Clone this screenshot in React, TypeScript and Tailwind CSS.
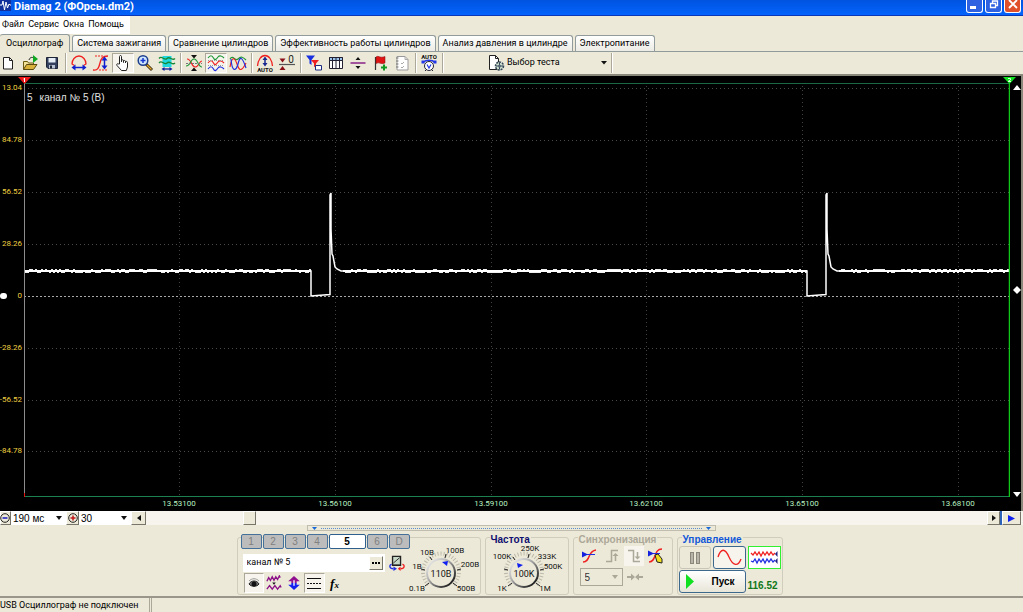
import React, { useState } from 'react';

const tabs = [
  'Осциллограф',
  'Система зажигания',
  'Сравнение цилиндров',
  'Эффективность работы цилиндров',
  'Анализ давления в цилиндре',
  'Электропитание',
];

// Plot area size in chart units
const PLOT_W = 986;
const PLOT_H = 414;

const yTicks = [
  { y: 5, label: '13.04' },
  { y: 57, label: '84.78' },
  { y: 109, label: '56.52' },
  { y: 161, label: '28.26' },
  { y: 213, label: '0' },
  { y: 265, label: '-28.26' },
  { y: 317, label: '-56.52' },
  { y: 368, label: '-84.78' },
];

const xTicks = [
  { x: 155, label: '13.53100' },
  { x: 311, label: '13.56100' },
  { x: 467, label: '13.59100' },
  { x: 622, label: '13.62100' },
  { x: 778, label: '13.65100' },
  { x: 934, label: '13.68100' },
];

// Injector pulse: drop to zero, spike, decay back to supply level
const pulse = (x: number) =>
  `L${x} 188 V213 L${x + 6} 212.5 L${x + 19} 211.5 V112 L${x + 20} 110 V146 L${x + 21} 171 L${x + 22} 173 L${x + 24} 184 L${x + 26} 186 L${x + 30} 188`;

const tracePath = `M0 188 ${pulse(287)} ${pulse(783)} L${PLOT_W} 188`;

// Noise on the supply level
const noisePath = (() => {
  let d = '';
  let seed = 17;
  for (let x = 1; x < PLOT_W - 2; x += 2) {
    seed = (seed * 1103515245 + 12345) % 2147483648;
    const inPulse = (x > 285 && x < 320) || (x > 781 && x < 816);
    if (inPulse) continue;
    const n = seed / 2147483648;
    if (n < 0.4) d += `M${x} 186.5h2`;
    else if (n < 0.8) d += `M${x} 189.5h2`;
  }
  return d;
})();

const Icon = ({ children, className = 'h-[18px] w-[18px]', box = '0 0 18 18' }: { children: React.ReactNode; className?: string; box?: string }) => (
  <svg className={`shrink-0 ${className}`} viewBox={box} fill="none" aria-hidden="true">
    {children}
  </svg>
);

const NewIcon = () => (
  <Icon>
    <path d="M4.500 3.500h6l3 3v8.500h-9z" fill="#fff" stroke="#222" />
    <path d="M10.500 3.500v3h3" stroke="#222" />
  </Icon>
);

const OpenIcon = () => (
  <Icon>
    <path d="M2.500 15.500v-8h4l1 1.500h5v2" fill="#f3e29a" stroke="#6b5a10" />
    <path d="M2.500 15.500l3-5h10.500l-3.500 5z" fill="#d9b23c" stroke="#5a4a10" />
    <path d="M8 6c1-3 3-3 5-2" stroke="#222" />
    <path d="M12 1l5 4-5 4z" fill="#10a820" />
  </Icon>
);

const SaveIcon = () => (
  <Icon>
    <path d="M3.500 3.500h11v11H5L3.500 13z" fill="#33415f" stroke="#1d2435" />
    <path d="M5.500 4h7v4.500h-7z" fill="#e6edf5" />
    <path d="M6 11h6v3.500H6z" fill="#b9c3d3" />
    <path d="M7 11.500h2v3H7z" fill="#1d2435" />
  </Icon>
);

const HorizIcon = () => (
  <Icon>
    <path d="M4.500 11.500L2 10c0-4 3-8 7-8s7 4 7 8l-2.500 1.500" stroke="#f02020" strokeWidth="1.300" />
    <path d="M3 13.500h12" stroke="#1020d0" strokeWidth="1.500" />
    <path d="M1.500 13.500l4-3v6zM16.500 13.500l-4-3v6z" fill="#1020d0" />
  </Icon>
);

const VertIcon = () => (
  <Icon>
    <path d="M1 16c5 1 6-3 7-7s2-7 8-7" stroke="#f02020" strokeWidth="1.300" />
    <path d="M7 16h9M3 2h8" stroke="#f02020" strokeDasharray="2 1" />
    <path d="M12.500 5v8" stroke="#1020d0" strokeWidth="1.500" />
    <path d="M12.500 2.500l3 4h-6zM12.500 15.500l3-4h-6z" fill="#1020d0" />
  </Icon>
);

const HandIcon = () => (
  <Icon>
    <path
      d="M5.500 10V2.500c0-1.300 2-1.300 2 0V8V6.500c0-1 2-1 2 .2V8.500V7.200c0-1 2-.9 2 .2V9V8c0-.9 2-.8 2 .4V13l-1.200 3.500H7.500L3 11.500c-1-1.500.8-2.200 1.500-1.500z"
      fill="#fff"
      stroke="#222"
    />
  </Icon>
);

const ZoomIcon = () => (
  <Icon>
    <path d="M10 10l6 6" stroke="#3b2a10" strokeWidth="3" />
    <path d="M11 11l4.500 4.500" stroke="#e0a92c" strokeWidth="1.300" />
    <circle cx="7" cy="6.500" r="4.800" fill="#cfe6ff" stroke="#1c3e8c" strokeWidth="1.500" />
    <path d="M4.500 6.500h5M7 4v5" stroke="#1436d0" strokeWidth="1.500" />
  </Icon>
);

const CyanIcon = () => (
  <Icon>
    <path d="M4.500 2h9v11h-9z" fill="#20d8e0" />
    <path d="M1 4.500c3-4 5 3 8 0s5 3 8 0" stroke="#188838" strokeWidth="1.300" />
    <path d="M1 9c3-4 5 3 8 0s5 3 8 0" stroke="#188838" strokeWidth="1.300" />
    <path d="M6 15h6" stroke="#1020a0" strokeWidth="1.300" />
    <path d="M3.500 15l3-2v4zM14.500 15l-3-2v4z" fill="#1020a0" />
  </Icon>
);

const CrossWavesIcon = () => (
  <Icon>
    <path d="M2 5c5 0 4 8 8 8s4-6 7-6" stroke="#f02020" strokeWidth="1.200" />
    <path d="M1 12c5 0 4-7 8-7s4 8 8 8" stroke="#209838" strokeWidth="1.200" />
    <path d="M1 9.500h16" stroke="#777" strokeDasharray="2 1" />
    <path d="M6 1h6L9 4.500zM6 17h6l-3-3.500z" fill="#111" />
  </Icon>
);

const ThreeWavesIcon = () => (
  <Icon>
    <path d="M1 4c2-3 4-3 5.500 0s3 1 4.500-1 4-1 6 1" stroke="#209838" strokeWidth="1.200" />
    <path d="M1 9c2-3 4-3 5.500 0s3 1 4.500-1 4-1 6 1" stroke="#f02020" strokeWidth="1.200" />
    <path d="M1 15c2-3 4-3 5.500 0s3 1 4.500-1 4-1 6 1" stroke="#2030e0" strokeWidth="1.200" />
    <path d="M1 6.500h16M1 11.500h16" stroke="#999" strokeDasharray="1 1" />
  </Icon>
);

const OverlayWavesIcon = () => (
  <Icon>
    <path d="M1 5c3-5 5 3 8 0s5-2 8 1" stroke="#209838" strokeWidth="1.200" />
    <path d="M1 13c2-12 5-9 7-3s4 9 9-1" stroke="#f02020" strokeWidth="1.200" />
    <path d="M2 5c1 13 5 13 7 5s4-8 8 4" stroke="#2030e0" strokeWidth="1.200" />
  </Icon>
);

const AutoLevelIcon = () => (
  <Icon>
    <path d="M1.500 12C2 6 5 1.500 9 1.500S16 6 16.500 12" stroke="#f02020" strokeWidth="1.300" />
    <path d="M9 4v7" stroke="#182890" strokeWidth="1.500" />
    <path d="M9 2.500l2.500 3.500h-5zM9 12.500l2.500-3.500h-5z" fill="#182890" />
    <text x="9" y="17.500" textAnchor="middle" fontSize="6" fontWeight="700" fill="#111">AUTO</text>
  </Icon>
);

const ZeroIcon = () => (
  <Icon>
    <path d="M1 10.500h16" stroke="#555" strokeWidth="1.200" />
    <path d="M1.500 4.500h6l-3 4zM1.500 16h6l-3-4z" fill="#8c1018" />
    <text x="13" y="8.500" textAnchor="middle" fontSize="10" fill="#222">0</text>
  </Icon>
);

const FiltersIcon = () => (
  <Icon>
    <path d="M1 1.500h9L6.500 6v5l-2-1.500V6z" fill="#1830e0" />
    <path d="M6 6h8l-3 3.500V14l-2-1.500v-3z" fill="#f02020" />
    <path d="M10.500 11.500h6v4.500h-6z" fill="#fff" stroke="#1c2c80" />
  </Icon>
);

const TableIcon = () => (
  <Icon>
    <path d="M2.500 3.500h13v11h-13z" fill="#fff" stroke="#223" />
    <path d="M2.500 3.500h13v3h-13z" fill="#9cc4ec" stroke="#223" />
    <path d="M5.500 4v11M9 4v11M12.500 4v11" stroke="#223" />
  </Icon>
);

const SplitIcon = () => (
  <Icon>
    <path d="M1.500 9h15" stroke="#882088" strokeWidth="1.500" />
    <path d="M9 3l2.500 3h-5zM9 15l2.500-3h-5z" fill="#111" />
  </Icon>
);

const FlagIcon = () => (
  <Icon>
    <path d="M4.500 3v13" stroke="#333" strokeWidth="1.200" />
    <path d="M5 3c2-2 4 1.500 9-.5V9c-4 2-6-1.500-9 .5z" fill="#e01414" stroke="#801010" strokeWidth=".5" />
    <path d="M13 10.500v6M10 13.500h6" stroke="#109820" strokeWidth="2" />
  </Icon>
);

const NotesIcon = () => (
  <Icon>
    <path d="M4 2.500h8l3 3v10.500H4z" fill="#fff" stroke="#999" />
    <path d="M3 4h2.500M3 7h2.500M3 10h2.500M3 13h2.500" stroke="#777" />
    <path d="M8 9l1 1 2-2M8 13l1 1 2-2M12 2.500v3h3" stroke="#aaa" />
  </Icon>
);

const AutoMeterIcon = () => (
  <Icon>
    <text x="9" y="4.500" textAnchor="middle" fontSize="6" fontWeight="700" fill="#111">AUTO</text>
    <path d="M3 8.500c3-3 9-3 12 0" stroke="#2438e8" strokeWidth="1.500" />
    <path d="M1.500 6.500h3v3h-3zM13.500 6.500h3v3h-3z" fill="#2438e8" />
    <circle cx="9" cy="12" r="4.500" fill="#fff" stroke="#223" />
    <path d="M7 10.500l2 3.500 2-3.500" stroke="#2438e8" strokeWidth="1.200" />
    <path d="M5 17l1.500-1.500M13 17l-1.500-1.500" stroke="#223" />
  </Icon>
);

const toolGroups = [
  [
    { name: 'Новый', icon: <NewIcon /> },
    { name: 'Открыть', icon: <OpenIcon /> },
    { name: 'Сохранить', icon: <SaveIcon /> },
  ],
  [
    { name: 'Измерение времени', icon: <HorizIcon /> },
    { name: 'Измерение уровня', icon: <VertIcon /> },
    { name: 'Рука', icon: <HandIcon />, pressed: true },
    { name: 'Масштаб', icon: <ZoomIcon /> },
    { name: 'Выделение', icon: <CyanIcon /> },
  ],
  [
    { name: 'Центрировать', icon: <CrossWavesIcon /> },
    { name: 'Раздельно', icon: <ThreeWavesIcon />, pressed: true },
    { name: 'Совместно', icon: <OverlayWavesIcon /> },
  ],
  [
    { name: 'Автоуровень', icon: <AutoLevelIcon /> },
    { name: 'Ноль', icon: <ZeroIcon /> },
  ],
  [
    { name: 'Фильтры', icon: <FiltersIcon /> },
    { name: 'Таблица', icon: <TableIcon /> },
    { name: 'Разделить', icon: <SplitIcon /> },
    { name: 'Метка', icon: <FlagIcon /> },
    { name: 'Заметки', icon: <NotesIcon /> },
  ],
  [{ name: 'Автоизмерение', icon: <AutoMeterIcon /> }],
];

const Separator = () => (
  <div className="flex h-5 w-[5px] shrink-0 justify-center">
    <div className="w-px bg-[#aca899]" />
    <div className="w-px bg-white" />
  </div>
);

const TitleBar = () => (
  <header className="flex h-4 shrink-0 justify-between border-b border-[#0a36b8] bg-gradient-to-b from-[#0054e0] to-[#0463fc]">
    <div className="flex items-start">
      <svg className="h-3 w-3" viewBox="0 0 12 12" fill="none" aria-hidden="true">
        <path d="M0 0h11v11H0z" fill="#12309c" />
        <path d="M0 5h2l1-4 1.500 9L6 2l1.500 6L9 4l1 1h1" stroke="#fff" />
      </svg>
      <h1 className="ml-0.5 text-[11px] leading-[13px] font-bold text-white">Diamag 2 (ФОрсы.dm2)</h1>
    </div>
    <div className="flex gap-0.5 pr-0.5">
      <button aria-label="Свернуть" className="flex h-[13px] w-[17px] items-end justify-start rounded-b-[3px] border border-t-0 border-white bg-[#2f62e0] pb-[3px] pl-[3px]">
        <span className="h-[3px] w-1.5 bg-white" />
      </button>
      <button aria-label="Восстановить" className="flex h-[13px] w-[17px] justify-center rounded-b-[3px] border border-t-0 border-white bg-[#2f62e0]">
        <svg className="h-2.5 w-2.5" viewBox="0 0 10 10" fill="none" stroke="#fff" aria-hidden="true">
          <path d="M3.500 3V1h5v4.500H7M1.500 3.500h5v4h-5z" strokeWidth="1.300" />
        </svg>
      </button>
      <button aria-label="Закрыть" className="flex h-[13px] w-[17px] justify-center rounded-b-[3px] border border-t-0 border-white bg-[#e0512b]">
        <svg className="h-2.5 w-2.5" viewBox="0 0 10 10" fill="none" stroke="#fff" aria-hidden="true">
          <path d="M1 0l8 8M9 0L1 8" strokeWidth="1.800" />
        </svg>
      </button>
    </div>
  </header>
);

const Toolbar = () => (
  <div className="flex h-6 shrink-0 items-center border-b-2 border-[#8a877b] pb-px">
    <div className="-ml-[3px] flex items-center">
      {toolGroups.map((group, i) => (
        <React.Fragment key={i}>
          {group.map((tool) => (
            <button
              key={tool.name}
              aria-label={tool.name}
              className={`flex h-5 w-[22px] items-center justify-center border ${tool.pressed ? 'border-t-[#aca899] border-r-white border-b-white border-l-[#aca899] bg-[#f6f4ec]' : 'border-transparent'}`}
            >
              {tool.icon}
            </button>
          ))}
          <Separator />
        </React.Fragment>
      ))}
    </div>
    <button className="ml-[42px] flex w-[122px] items-center gap-0.5">
      <Icon>
        <path d="M2.500 1.500h6l3 3v11h-9z" fill="#fff" stroke="#222" />
        <path d="M8.500 1.500v3h3" stroke="#222" />
        <circle cx="12.500" cy="12" r="4" fill="#cfe0cf" stroke="#345" strokeWidth="1.500" strokeDasharray="2 1" />
        <path d="M9 12h7M12.500 8.500v7" stroke="#345" />
        <circle cx="12.500" cy="12" r="1.500" fill="#567" />
      </Icon>
      <span>Выбор теста</span>
      <svg className="mr-0.5 ml-auto h-1 w-1.5" viewBox="0 0 6 4" aria-hidden="true"><path d="M0 0h6L3 3.500z" fill="#111" /></svg>
    </button>
    <Separator />
  </div>
);

const Scope = () => (
  <main className="grid min-h-[300px] flex-1 grid-cols-[24px_minmax(0,1fr)_11px] grid-rows-[7px_minmax(0,1fr)_14px] border-r-2 border-[#8a877b] bg-black">
    <div className="relative col-start-1 row-start-2">
      {yTicks.map((tick) => (
        <span
          key={tick.label}
          className="absolute right-0.5 -translate-y-1/2 text-[8px] leading-[8px] text-[#f0d040]"
          style={{ top: `${(tick.y / PLOT_H) * 100}%` }}
        >
          {tick.label}
        </span>
      ))}
      <span className="absolute left-0 h-1.5 w-[7px] -translate-y-1/2 rounded-full bg-white" style={{ top: `${(213 / PLOT_H) * 100}%` }} />
    </div>

    <div className="relative col-start-2 row-start-2">
      <svg className="absolute inset-0 h-full w-full" viewBox={`0 0 ${PLOT_W} ${PLOT_H}`} preserveAspectRatio="none" fill="none" aria-label="Осциллограмма">
        {yTicks.map((tick) => (
          <path
            key={tick.label}
            d={`M0 ${tick.y + 0.5}H${PLOT_W}`}
            stroke={tick.label === '0' ? '#a8a8a8' : '#484848'}
            strokeDasharray={tick.label === '0' ? '2 2' : '1 3'}
            vectorEffect="non-scaling-stroke"
          />
        ))}
        {xTicks.map((tick) => (
          <path key={tick.label} d={`M${tick.x + 0.5} 3V${PLOT_H}`} stroke="#404040" strokeDasharray="1 3" vectorEffect="non-scaling-stroke" />
        ))}
        <path d={tracePath} stroke="#fff" strokeWidth="1.500" vectorEffect="non-scaling-stroke" />
        <path d={`M0 188H287M319 188H783M815 188H${PLOT_W}`} stroke="#fff" strokeWidth="2" vectorEffect="non-scaling-stroke" />
        <path d={noisePath} stroke="#eee" vectorEffect="non-scaling-stroke" />
        <path d={`M0 .5H${PLOT_W}`} stroke="#1a6845" vectorEffect="non-scaling-stroke" />
        <path d={`M0 ${PLOT_H - 0.5}H${PLOT_W}`} stroke="#1c8050" vectorEffect="non-scaling-stroke" />
        <path d={`M.5 0V${PLOT_H}`} stroke="#8c8c8c" vectorEffect="non-scaling-stroke" />
        <path d={`M.5 ${PLOT_H - 4}V${PLOT_H}`} stroke="#e01010" vectorEffect="non-scaling-stroke" />
        <path d={`M${PLOT_W - 0.5} 0V${PLOT_H}`} stroke="#10c818" strokeWidth="1.500" vectorEffect="non-scaling-stroke" />
      </svg>
      <svg className="absolute -top-1.5 -left-1.5 h-[7px] w-[13px]" viewBox="0 0 13 7" aria-hidden="true">
        <path d="M0 0h13L6.500 7z" fill="#f01818" />
        <path d="M6.500 1v4M5.500 2h1" stroke="#fff" />
      </svg>
      <svg className="absolute -top-1.5 -right-1.5 h-[7px] w-[13px]" viewBox="0 0 13 7" aria-hidden="true">
        <path d="M0 0h13L6.500 7z" fill="#10e020" />
        <path d="M5 1.500h2.500v1.500L5 4.500h3" stroke="#d8ffd8" fill="none" />
      </svg>
      <div className="absolute top-2 left-[3px] flex gap-[7px] font-['Liberation_Sans',sans-serif] text-[10px] leading-[13px] text-[#e0e0e0]">
        <span>5</span>
        <span>канал № 5 (В)</span>
      </div>
    </div>

    <div className="relative col-start-3 row-start-2">
      <svg className="absolute top-0.5 right-0 h-[5px] w-2" viewBox="0 0 8 5" aria-hidden="true"><path d="M4 0l4 5H0z" fill="#fff" /></svg>
      <svg className="absolute top-1/2 right-0 h-2 w-2 -translate-y-1/2" viewBox="0 0 8 8" aria-hidden="true"><path d="M4 0l4 4-4 4-4-4z" fill="#fff" /></svg>
      <svg className="absolute right-0 bottom-0 h-[5px] w-2" viewBox="0 0 8 5" aria-hidden="true"><path d="M0 0h8L4 5z" fill="#fff" /></svg>
    </div>

    <div className="relative col-start-2 row-start-3">
      {xTicks.map((tick) => (
        <span
          key={tick.label}
          className="absolute top-[3px] -translate-x-1/2 text-[8px] leading-[8px] text-[#b8f0c0]"
          style={{ left: `${(tick.x / PLOT_W) * 100}%` }}
        >
          {tick.label}
        </span>
      ))}
    </div>
  </main>
);

const DropArrow = ({ color = '#111' }: { color?: string }) => (
  <svg className="pointer-events-none absolute top-1/2 right-1 h-1 w-1.5 -translate-y-1/2" viewBox="0 0 6 4" aria-hidden="true">
    <path d="M0 0h6L3 4z" fill={color} />
  </svg>
);

const raised = 'border border-t-white border-r-[#77746a] border-b-[#77746a] border-l-white bg-[#ece9d8]';

const ScrollRow = () => (
  <div className="flex h-[14px] shrink-0 items-stretch bg-[#f6f4ec]">
    <button aria-label="Уменьшить" className={`flex w-[11px] items-center justify-end ${raised}`}>
      <svg className="h-2.5 w-2.5 shrink-0" viewBox="0 0 10 10" fill="none" aria-hidden="true">
        <circle cx="5" cy="5" r="4.300" stroke="#222" />
        <path d="M2.500 5h5" stroke="#1818c0" strokeWidth="1.500" />
      </svg>
    </button>
    <label className="relative w-[55px] bg-white">
      <select aria-label="Развёртка" className="h-full w-full appearance-none pl-0.5 font-['Liberation_Sans',sans-serif] text-[10px] leading-[13px]">
        <option>190 мс</option>
      </select>
      <DropArrow />
    </label>
    <button aria-label="Увеличить" className={`flex w-[13px] items-center justify-center ${raised}`}>
      <svg className="h-2.5 w-2.5 shrink-0" viewBox="0 0 10 10" fill="none" aria-hidden="true">
        <circle cx="5" cy="5" r="4.300" stroke="#222" />
        <path d="M2.500 5h5M5 2.500v5" stroke="#c01818" strokeWidth="1.500" />
      </svg>
    </button>
    <label className="relative w-[52px] bg-white">
      <select aria-label="Усиление" className="h-full w-full appearance-none pl-0.5 font-['Liberation_Sans',sans-serif] text-[10px] leading-[13px]">
        <option>30</option>
      </select>
      <DropArrow />
    </label>
    <button aria-label="Влево" className={`flex w-[15px] items-center justify-center ${raised}`}>
      <svg className="h-1.5 w-1" viewBox="0 0 4 6" aria-hidden="true"><path d="M4 0v6L0 3z" fill="#111" /></svg>
    </button>
    <div className="flex flex-1">
      <div className="w-[11%]" />
      <div className={`ml-1 w-[13px] ${raised}`} />
    </div>
    <button aria-label="Вправо" className={`flex w-[13px] items-center justify-center ${raised}`}>
      <svg className="h-1.5 w-1" viewBox="0 0 4 6" aria-hidden="true"><path d="M0 0v6l4-3z" fill="#111" /></svg>
    </button>
    <div className="w-0.5 bg-[#2c62b8]" />
    <button aria-label="В конец" className={`mr-0.5 flex w-[19px] items-center justify-center ${raised}`}>
      <svg className="h-[7px] w-[7px]" viewBox="0 0 7 7" aria-hidden="true"><path d="M0 0v7l7-3.500z" fill="#1020f0" /></svg>
    </button>
  </div>
);

type KnobLabel = { x: number; y: number; text: string };

const Knob = ({ value, labels, pointer }: { value: string; labels: KnobLabel[]; pointer: string }) => (
  <svg className="h-14 w-[82px] shrink-0" viewBox="0 0 82 56" aria-label={value}>
    <defs>
      <linearGradient id="rim" x1="0" y1="0" x2="1" y2="1">
        <stop offset="0" stopColor="#fff" />
        <stop offset=".4" stopColor="#b0b0b0" />
        <stop offset=".9" stopColor="#101010" />
      </linearGradient>
    </defs>
    <path d="M28.500 46.500a18 18 0 1 1 25 0" fill="none" stroke="#bcb9aa" strokeWidth="4" strokeDasharray="1 2" />
    <path d="M25 48l4-3M57 48l-4-3M21 31l4 1M61 31l-4 1M30 19l2 3M46 16l-1 4" stroke="#222" />
    <circle cx="41" cy="35" r="15" fill="url(#rim)" />
    <circle cx="41" cy="35" r="13" fill="#ece9d8" />
    <path d={pointer} fill="#1020f0" />
    <text x="41" y="39" textAnchor="middle" fontSize="9" fill="#111">{value}</text>
    {labels.map((label) => (
      <text key={label.text} x={label.x} y={label.y} textAnchor="middle" fontSize="8" fill="#111">{label.text}</text>
    ))}
  </svg>
);

const voltLabels = [
  { x: 27, y: 17, text: '10В' },
  { x: 55, y: 15, text: '100В' },
  { x: 70, y: 29, text: '200В' },
  { x: 66, y: 53, text: '500В' },
  { x: 17, y: 53, text: '0.1В' },
  { x: 17, y: 31, text: '1В' },
];

const freqLabels = [
  { x: 47, y: 13, text: '250K' },
  { x: 19, y: 21, text: '100K' },
  { x: 64, y: 21, text: '333K' },
  { x: 70, y: 31, text: '500K' },
  { x: 62, y: 53, text: '1M' },
  { x: 19, y: 53, text: '1K' },
];

const channels = ['1', '2', '3', '4', '5', '6', 'D'];

const ChannelGroup = () => {
  const [channel, setChannel] = useState('5');

  return (
    <section className="flex w-[244px] rounded-[3px] border border-[#d0cdbd]">
      <div className="-mt-1 w-[168px] shrink-0 pl-[3px]">
        <div className="flex w-[170px]">
          {channels.map((c) => (
            <button
              key={c}
              onClick={() => setChannel(c)}
              className={`mr-px h-[15px] rounded-[2px] border font-['Liberation_Sans',sans-serif] text-[10px] leading-[12px] ${c === channel ? 'w-[37px] border-[#2f5f8c] bg-white font-bold text-black' : 'w-[21px] border-[#44709a] bg-[#bcbcbc] text-[#808080]'}`}
            >
              {c}
            </button>
          ))}
        </div>
        <div className="mt-[5px] flex items-center gap-1">
          <div className="ml-0.5 flex h-[18px] w-[142px] items-center bg-white pr-0.5">
            <input aria-label="Название канала" defaultValue="канал № 5" className="w-0 flex-1 pl-1 text-[9px] outline-none" />
            <button aria-label="Выбрать" className={`flex h-[14px] w-[14px] items-center justify-center gap-px ${raised}`}>
              <span className="h-0.5 w-0.5 bg-black" />
              <span className="h-0.5 w-0.5 bg-black" />
              <span className="h-0.5 w-0.5 bg-black" />
            </button>
          </div>
          <Icon className="h-4 w-4">
            <path d="M4 1.500h9v10H4z" fill="#c8d8c8" stroke="#222" strokeWidth="1.500" />
            <path d="M5 9l7-6M4 11.500h9" stroke="#222" />
            <path d="M5 15.500c-5 0-5-5-2-5" stroke="#2030e0" strokeWidth="1.500" />
            <path d="M13 15.500c5 0 5-5 2-5" stroke="#f02020" strokeWidth="1.500" />
            <path d="M5 13l4 2.500L5 18z" fill="#2030e0" />
            <path d="M13 13l-3 2.500 3 2.500z" fill="#f02020" />
          </Icon>
        </div>
        <div className="mt-px ml-[3px] flex items-center">
          <button aria-label="Показать" className="flex h-5 w-5 items-center justify-center border border-t-[#aca899] border-r-white border-b-white border-l-[#aca899] bg-[#f6f4ec]">
            <Icon className="h-3 w-3" box="0 0 12 12">
              <path d="M1 7c2-4 8-4 10 0-2 3-8 3-10 0z" fill="#777" stroke="#222" />
              <circle cx="6" cy="7" r="2.500" fill="#111" />
              <path d="M1 4c3-3 7-3 10 0" stroke="#999" />
            </Icon>
          </button>
          <button aria-label="Инвертировать" className="flex h-5 w-5 items-center justify-center">
            <Icon className="h-4 w-4">
              <path d="M1 7l2-4 2 3 2-4 2 4 2-4 2 3 2-4 1 2M1 16l3-4 3 4 3-4 3 4 3-4 1 2" stroke="#8c1088" strokeWidth="1.500" />
              <path d="M7 8.500h4L9 11z" fill="#111" />
            </Icon>
          </button>
          <button aria-label="Масштаб по вертикали" className="flex h-5 w-5 items-center justify-center">
            <Icon className="h-4 w-4">
              <path d="M9 1L2.500 7H6v2h6V7h3.500z" fill="#901090" />
              <path d="M9 17l-6.500-6H6V9h6v2h3.500z" fill="#1420f0" />
              <path d="M9 6v6" stroke="#fff" strokeWidth="1.500" />
            </Icon>
          </button>
          <button aria-label="Линии" className="flex h-5 w-[21px] items-center justify-center border border-t-[#aca899] border-r-white border-b-white border-l-[#aca899] bg-[#f6f4ec]">
            <Icon className="h-4 w-4" box="0 0 16 16">
              <path d="M1 3.500h14M1 13.500h14" stroke="#111" />
              <path d="M1 8.500h14" stroke="#111" strokeDasharray="2 1" />
            </Icon>
          </button>
          <button aria-label="Функция" className="w-5 font-['Liberation_Serif',serif] text-[13px] leading-none font-bold italic">
            f<span className="text-[9px]">x</span>
          </button>
        </div>
      </div>
      <div className="-ml-[6px]">
        <Knob value="110В" labels={voltLabels} pointer="M42 24l6-1-1 5z" />
      </div>
    </section>
  );
};

const Group = ({ title, titleClass, className, children }: { title: string; titleClass: string; className: string; children: React.ReactNode }) => (
  <fieldset className={`relative rounded-[3px] border border-[#d0cdbd] ${className}`}>
    <legend className={`absolute -top-1 left-1 bg-[#ece9d8] px-px font-['Liberation_Sans',sans-serif] text-[10px] leading-[11px] font-bold ${titleClass}`}>{title}</legend>
    {children}
  </fieldset>
);

const SyncGroup = () => (
  <Group title="Синхронизация" titleClass="text-[#aca899]" className="w-[100px]">
    <div className="mt-2 ml-1 flex">
      <button aria-label="Уровень" className="flex h-5 w-[23px] items-center justify-center">
        <Icon className="h-4 w-4" box="0 0 16 16">
          <path d="M2 14c8 0 4-11 13-12" stroke="#f02020" strokeWidth="1.500" />
          <path d="M1 6.500h13" stroke="#2030e0" />
          <path d="M1 3.500l6 3-6 3z" fill="#1420e0" />
        </Icon>
      </button>
      <button aria-label="По фронту" disabled className="flex h-5 w-[23px] items-center justify-center">
        <Icon className="h-4 w-4" box="0 0 16 16">
          <path d="M2 13.500h5.500v-11H14M11.500 13V7" stroke="#aca899" strokeWidth="1.500" />
          <path d="M11.500 5l3 3h-6z" fill="#aca899" />
        </Icon>
      </button>
      <button aria-label="По спаду" disabled className="flex h-5 w-5 items-center justify-center bg-[#f6f4ec]">
        <Icon className="h-4 w-4" box="0 0 16 16">
          <path d="M2 2.500h5.500v11H14M11.500 4v5" stroke="#aca899" strokeWidth="1.500" />
          <path d="M11.500 11.500l3-3h-6z" fill="#aca899" />
        </Icon>
      </button>
      <button aria-label="Захват" className="flex h-5 w-[23px] items-center justify-center">
        <Icon className="h-4 w-4" box="0 0 16 16">
          <path d="M2 14C10 14 6 1 15 1" stroke="#f02020" strokeWidth="1.500" />
          <path d="M1 5.500h12" stroke="#2030e0" />
          <path d="M1 2.500l6 3-6 3z" fill="#1420e0" />
          <path d="M8 7l3-1 4 5v4l-5-1z" fill="#f0e020" stroke="#222" />
        </Icon>
      </button>
    </div>
    <div className="mt-0.5 ml-1.5 flex items-center gap-1">
      <label className="relative h-[18px] w-[43px] border border-[#aca899]">
        <select aria-label="Канал синхронизации" disabled className="h-full w-full appearance-none pl-1 font-['Liberation_Sans',sans-serif] text-[10px] text-[#333] opacity-100">
          <option>5</option>
        </select>
        <DropArrow color="#aca899" />
      </label>
      <Icon className="h-4 w-4" box="0 0 16 16">
        <path d="M0 8h5M11 8h5" stroke="#aca899" strokeWidth="2" />
        <path d="M4 4.500L8 8l-4 3.500zM12 4.500L8 8l4 3.500z" fill="#aca899" />
      </Icon>
    </div>
  </Group>
);

const ControlGroup = () => (
  <Group title="Управление" titleClass="text-[#1258d8]" className="w-[106px]">
    <div className="mt-2 ml-px flex gap-0.5">
      <button aria-label="Пауза" disabled className="flex h-[23px] w-[32px] items-center justify-center gap-0.5 rounded-[3px] border border-[#c8c5b6]">
        <span className="h-3 w-1 border border-[#8a877b] bg-[#b8b5a8]" />
        <span className="h-3 w-1 border border-[#8a877b] bg-[#b8b5a8]" />
      </button>
      <button aria-label="Одиночный" className="flex h-[23px] w-[33px] items-center justify-center rounded-[3px] border border-[#3d688e] bg-[#f6f4ec]">
        <svg className="h-[17px] w-[25px]" viewBox="0 0 25 17" fill="none" aria-hidden="true">
          <path d="M1 8C4-1 8-1 12 8s9 10 12 2" stroke="#f02020" strokeWidth="1.300" />
        </svg>
      </button>
      <button aria-label="Непрерывный" className="flex h-[23px] w-[33px] items-center justify-center border border-[#30f030] bg-white">
        <svg className="h-[17px] w-[28px]" viewBox="0 0 28 17" fill="none" aria-hidden="true">
          <path d="M1 4l2 2 2-3 2 3 2-3 2 4 2-4 2 3 2-3 2 3 2-3 2 3 2-2" stroke="#f02020" strokeWidth="1.300" />
          <path d="M1 12l2 1 2-3 2 4 2-4 2 3 2-3 2 4 2-4 2 3 2-3 2 3 2-2" stroke="#2030e0" strokeWidth="1.300" />
          <path d="M27.500 2v6L25 5zM27.500 9v6L25 12z" fill="#202080" />
        </svg>
      </button>
    </div>
    <div className="mt-px ml-px flex items-center gap-0.5">
      <button className="flex h-[23px] w-[67px] items-center rounded-[3px] border border-[#3d688e] bg-gradient-to-b from-white to-[#e8e5d8] pl-1.5 font-['Liberation_Sans',sans-serif] text-[10px] font-bold">
        <svg className="h-[15px] w-2" viewBox="0 0 8 15" aria-hidden="true"><path d="M0 0v15l8-7.500z" fill="#10e020" /></svg>
        <span className="flex-1 pl-2">Пуск</span>
      </button>
      <output className="pt-2 font-['Liberation_Sans',sans-serif] text-[10px] font-bold text-[#107818]">116.52</output>
    </div>
  </Group>
);

const ControlPanel = () => (
  <div className="shrink-0 pb-px">
    <div className="mx-auto flex h-[6px] w-[409px] items-center justify-between border border-[#c0bdae] px-1">
      <svg className="h-[3px] w-[5px]" viewBox="0 0 5 3" aria-hidden="true"><path d="M0 0h5L2.500 3z" fill="#1868d8" /></svg>
      <div className="mx-1 flex-1 border-t border-dotted border-[#5c8cd0]" />
      <svg className="h-[3px] w-[5px]" viewBox="0 0 5 3" aria-hidden="true"><path d="M0 0h5L2.500 3z" fill="#1868d8" /></svg>
    </div>
    <div className="mt-1.5 flex h-[58px] justify-center gap-1 pr-1">
      <ChannelGroup />
      <Group title="Частота" titleClass="text-[#101070]" className="w-[84px]">
        <div className="-ml-[3px]">
          <Knob value="100K" labels={freqLabels} pointer="M34 25l6 2-5 3z" />
        </div>
      </Group>
      <SyncGroup />
      <ControlGroup />
    </div>
  </div>
);

const App = () => {
  const [active, setActive] = useState(0);

  return (
    <div className="flex h-screen flex-col overflow-hidden bg-[#ece9d8] font-[Roboto,'Liberation_Sans',sans-serif] text-[9px] text-black">
      <TitleBar />
      <nav className="flex h-[18px] w-[130px] shrink-0 items-center gap-1 bg-white pl-0.5">
        {['Файл', 'Сервис', 'Окна', 'Помощь'].map((item) => (
          <button key={item}>{item}</button>
        ))}
      </nav>
      <div role="tablist" className="flex h-[18px] shrink-0 items-end gap-0.5 border-b border-[#919b9c]">
        {tabs.map((tab, i) => (
          <button
            key={tab}
            role="tab"
            aria-selected={i === active}
            onClick={() => setActive(i)}
            className={`rounded-t-[3px] border border-b-0 border-[#919b9c] whitespace-nowrap ${i === active ? '-mb-px h-[18px] border-l-0 bg-[#ece9d8] px-1.5' : 'h-4 bg-gradient-to-b from-white to-[#ecebe5] px-1'}`}
          >
            {tab}
          </button>
        ))}
      </div>
      <Toolbar />
      <Scope />
      <ScrollRow />
      <ControlPanel />
      <footer className="flex h-4 shrink-0 border-t-2 border-[#9a978a]">
        <div className="w-[150px] border-r border-[#aca899] leading-[14px] whitespace-nowrap">USB Осциллограф не подключен</div>
        <div className="ml-px flex-1 border-l border-[#aca899]" />
      </footer>
    </div>
  );
};

export default App;
